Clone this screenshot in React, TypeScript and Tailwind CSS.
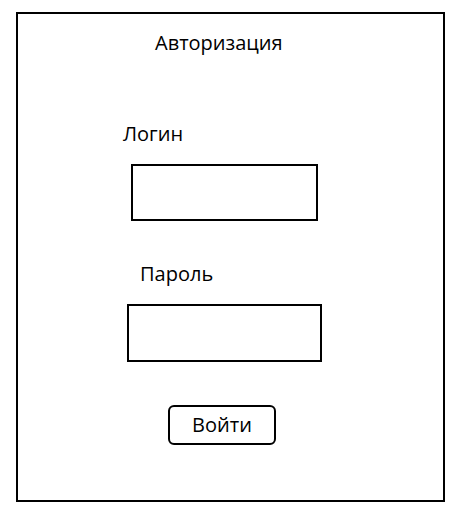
export default function App() {
  return (
    <div className="w-[470px] h-[516px] bg-white pt-[12px] pl-[16px]" style={{ fontFamily: '"Open Sans", "Noto Sans", sans-serif' }}>
      <div className="w-[429px] h-[490px] border-2 border-black flex flex-col items-start text-black">
        <div className="mt-[16px] ml-[137px] text-[20px] leading-[26px]">Авторизация</div>

        <div className="mt-[65px] ml-[105px] text-[20px] leading-[26px]">Логин</div>
        <div className="mt-[17px] ml-[113px] w-[187px] h-[57px] border-2 border-black" />

        <div className="mt-[40px] ml-[122px] text-[20px] leading-[26px]">Пароль</div>
        <div className="mt-[17px] ml-[109px] w-[195px] h-[58px] border-2 border-black" />

        <button className="mt-[43px] ml-[150px] w-[108px] h-[40px] border-2 border-black rounded-[6px] text-[20px] leading-[26px]">
          Войти
        </button>
      </div>
    </div>
  );
}
